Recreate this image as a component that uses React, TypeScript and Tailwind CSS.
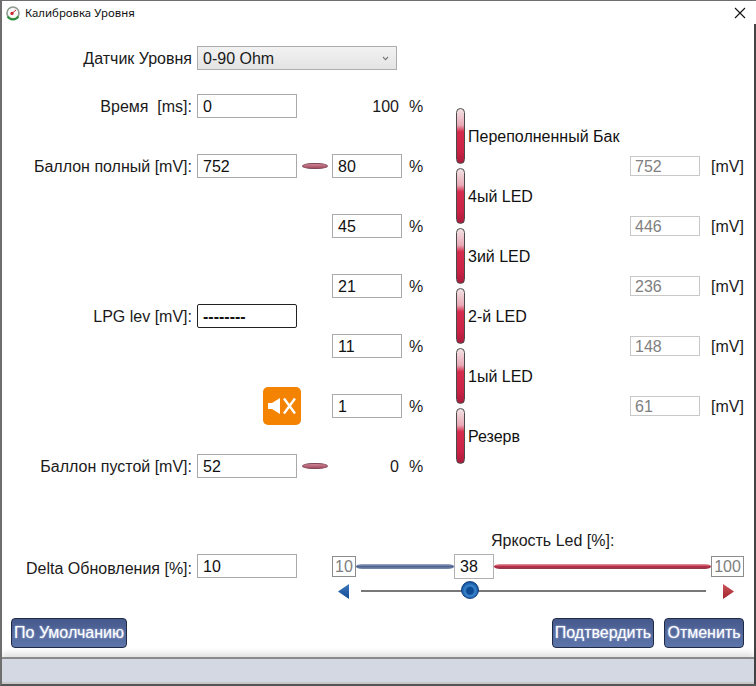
const font = "font-['Liberation_Sans',Arial,sans-serif]";

function Field({ value, className = "w-[100px]" }: { value: string; className?: string }) {
  return (
    <div className={`h-6 ${className} border border-[#a9a9a9] bg-white pl-[5px] text-base leading-6 text-[#111]`}>
      {value}
    </div>
  );
}

function Pill() {
  return (
    <div className="ml-[5px] h-[6px] w-[26px] rounded-[10px/3px] border border-[#7d4a58] bg-gradient-to-b from-[#cf8596] to-[#a44a60]" />
  );
}

// left side label + input row, 60px tall so the rows line up with the % column
function LeftRow({ label, value, pill }: { label: string; value: string; pill?: boolean }) {
  return (
    <div className="flex h-[60px] items-center">
      <div className="w-[190px] whitespace-pre pt-[2px] text-right text-base text-[#1a1a1a]">{label}</div>
      <div className="ml-[5px]">
        <Field value={value} />
      </div>
      {pill && <Pill />}
    </div>
  );
}

function PercentRow({ value, plain }: { value: string; plain?: boolean }) {
  return (
    <div className="flex h-[60px] items-center">
      {plain ? (
        <div className="w-[67px] pt-[2px] text-right text-base text-[#1a1a1a]">{value}</div>
      ) : (
        <Field value={value} className="w-[70px]" />
      )}
      <div className={`${plain ? "ml-[10px]" : "ml-[7px]"} pt-[2px] text-base text-[#1a1a1a]`}>%</div>
    </div>
  );
}

function LedRow({ label }: { label: string }) {
  return (
    <div className="flex h-[60px] items-center">
      <div className="h-[56px] w-[9px] rounded-full border border-[#4a4a4a] bg-[linear-gradient(to_bottom,#f3e3e6_0%,#e8a9b6_30%,#d62c4c_42%,#c92245_80%,#a81c3a_100%)]" />
      <div className="ml-[3px] pt-[2px] text-base text-[#111]">{label}</div>
    </div>
  );
}

function MvRow({ value }: { value: string }) {
  return (
    <div className="flex h-[60px] items-center">
      <div className="h-5 w-[70px] border border-[#c8c8c8] pl-[4px] text-base leading-5 text-[#808080]">{value}</div>
      <div className="ml-[11px] pt-[2px] text-base text-[#1a1a1a]">[mV]</div>
    </div>
  );
}

function BlueButton({ label, className }: { label: string; className: string }) {
  return (
    <button className={`h-[30px] ${className} rounded-[4px] border border-[#1f2a44] bg-gradient-to-b from-[#46598c] to-[#5d75ab] text-center text-base text-white [text-shadow:0_0_2px_#c8d4f0]`}>
      {label}
    </button>
  );
}

function AppIcon() {
  return (
    <svg width="16" height="16" viewBox="0 0 16 16">
      <circle cx="8" cy="8" r="6" fill="#f8f8f8" stroke="#8d9a8f" strokeWidth="1.6" />
      <path d="M2.6 11.5 A6.4 6.4 0 0 0 13.4 11.5" fill="none" stroke="#2f8f3e" strokeWidth="2.2" />
      <path d="M6.5 8.8 L11 5" stroke="#d3202c" strokeWidth="1" />
      <circle cx="7" cy="8.4" r="1.6" fill="#c8202c" />
    </svg>
  );
}

export default function App() {
  return (
    <div className={`flex h-[686px] w-[756px] flex-col overflow-hidden border-l-2 border-t border-b-2 border-l-[#6e6e6e] border-t-[#6e6e6e] border-b-[#555] bg-white ${font}`}>
      {/* title bar */}
      <div className="flex h-[23px] items-center pl-[3px] pr-[10px]">
        <AppIcon />
        <div className="ml-[4px] font-['Noto_Sans',sans-serif] text-[11.4px] text-[#111]">Калибровка Уровня</div>
        <svg className="ml-auto" width="12" height="12" viewBox="0 0 12 12">
          <path d="M1 1 L11 11 M11 1 L1 11" stroke="#111" strokeWidth="1.1" />
        </svg>
      </div>

      <div className="flex flex-1 flex-col border-r-2 border-r-[#444]">
        {/* sensor select */}
        <div className="mt-[22px] flex h-6 items-center">
          <div className="w-[190px] pt-[2px] text-right text-base text-[#1a1a1a]">Датчик Уровня</div>
          <div className="ml-[5px] flex h-6 w-[200px] items-center border border-[#adadad] bg-gradient-to-b from-[#f2f2f2] to-[#e4e4e4] pl-[5px] pr-[7px] text-base text-[#1a1a1a]">
            <span className="pt-[2px]">0-90 Ohm</span>
            <svg className="ml-auto" width="7" height="5" viewBox="0 0 7 5">
              <path d="M1 1 L3.5 3.6 L6 1" fill="none" stroke="#777" strokeWidth="1.1" />
            </svg>
          </div>
        </div>

        {/* main calibration columns */}
        <div className="mt-[6px] flex">
          <div className="w-[330px]">
            <LeftRow label="Время  [ms]:" value="0" />
            <LeftRow label="Баллон полный [mV]:" value="752" pill />
            <div className="h-[90px]" />
            <div className="flex h-[60px] items-center">
              <div className="w-[190px] pt-[2px] text-right text-base text-[#1a1a1a]">LPG lev [mV]:</div>
              <div className="ml-[5px] h-6 w-[100px] rounded-[2px] border border-[#222] pl-[5px] text-base font-bold leading-6 text-[#111]">--------</div>
            </div>
            <div className="h-[30px]" />
            <div className="flex h-[60px] items-center pl-[261px]">
              <button className="flex h-[38px] w-[38px] items-center justify-center rounded-[5px] bg-[#f38300]">
                <svg width="30" height="20" viewBox="0 0 30 20">
                  <path d="M1 7 H5 L13 2 V18 L5 13 H1 Z" fill="#fff" />
                  <path d="M17 2.5 L28 17.5 M28 2.5 L17 17.5" stroke="#fff" strokeWidth="2.4" />
                </svg>
              </button>
            </div>
            <LeftRow label="Баллон пустой [mV]:" value="52" pill />
          </div>

          <div className="w-[124px]">
            <PercentRow value="100" plain />
            <PercentRow value="80" />
            <PercentRow value="45" />
            <PercentRow value="21" />
            <PercentRow value="11" />
            <PercentRow value="1" />
            <PercentRow value="0" plain />
          </div>

          <div className="w-[174px] pt-[30px]">
            <LedRow label="Переполненный Бак" />
            <LedRow label="4ый LED" />
            <LedRow label="3ий LED" />
            <LedRow label="2-й LED" />
            <LedRow label="1ый LED" />
            <LedRow label="Резерв" />
          </div>

          <div className="pt-[60px]">
            <MvRow value="752" />
            <MvRow value="446" />
            <MvRow value="236" />
            <MvRow value="148" />
            <MvRow value="61" />
          </div>
        </div>

        {/* led brightness + delta */}
        <div className="mt-[34px] flex">
          <div className="flex w-[330px] items-start pt-[24px]">
            <div className="w-[190px] pt-[3px] text-right text-base leading-6 text-[#1a1a1a]">Delta Обновления [%]:</div>
            <div className="ml-[5px]">
              <Field value="10" />
            </div>
          </div>
          <div className="w-[412px]">
            <div className="h-[20px] pl-[159px] pt-[1px] text-base leading-5 text-[#1a1a1a]">Яркость Led [%]:</div>
            <div className="mt-[4px] flex h-[25px] items-center">
              <div className="h-[21px] w-[24px] border border-[#8c8c8c] text-center text-base leading-5 text-[#808080]">10</div>
              <div className="h-[5px] w-[98px] rounded-[6px/2.5px] bg-gradient-to-b from-[#a4b1c9] via-[#4f6490] to-[#7d8cab]" />
              <div className="h-[25px] w-[40px] border border-[#b0b0b0] pl-[5px] text-base leading-6 text-[#111]">38</div>
              <div className="h-[5px] w-[217px] rounded-[6px/2.5px] bg-gradient-to-b from-[#e59aa7] via-[#b92d48] to-[#8a3a4a]" />
              <div className="h-[21px] w-[33px] border border-[#8c8c8c] text-center text-base leading-5 text-[#808080]">100</div>
            </div>
            <div className="mt-[2px] flex h-[20px] items-center pl-[6px]">
              <svg width="11" height="15" viewBox="0 0 11 15">
                <defs>
                  <linearGradient id="arrowBlue" x1="0" y1="0" x2="0" y2="1">
                    <stop offset="0" stopColor="#3b78c0" />
                    <stop offset="1" stopColor="#124a90" />
                  </linearGradient>
                </defs>
                <path d="M11 0 V15 L0 7.5 Z" fill="url(#arrowBlue)" />
              </svg>
              <div className="relative ml-[12px] h-[2px] w-[345px] bg-[#777]">
                <div className="absolute left-[100px] top-[-9px] h-[18px] w-[18px] rounded-full border border-[#0f3f80] bg-[radial-gradient(circle_at_50%_55%,#0c4a94_0%,#0c4a94_28%,#3d86cc_42%,#0e4f9e_75%,#0b3f82_100%)]" />
              </div>
              <svg className="ml-[17px]" width="11" height="15" viewBox="0 0 11 15">
                <defs>
                  <linearGradient id="arrowRed" x1="0" y1="0" x2="0" y2="1">
                    <stop offset="0" stopColor="#c9575c" />
                    <stop offset="1" stopColor="#a3222a" />
                  </linearGradient>
                </defs>
                <path d="M0 0 V15 L11 7.5 Z" fill="url(#arrowRed)" />
              </svg>
            </div>
          </div>
        </div>

        {/* buttons */}
        <div className="mt-[17px] flex pl-[9px] pr-[10px]">
          <BlueButton label="По Умолчанию" className="w-[116px]" />
          <BlueButton label="Подтвердить" className="ml-auto w-[102px]" />
          <BlueButton label="Отменить" className="ml-[10px] w-[80px]" />
        </div>

        {/* status bar */}
        <div className="mt-auto h-[27px] border-y-2 border-t-[#8a8a8a] border-b-[#c8c8c8] bg-[#d3d8e3] shadow-[0_-4px_6px_rgba(0,0,0,0.12)]" />
      </div>
    </div>
  );
}
